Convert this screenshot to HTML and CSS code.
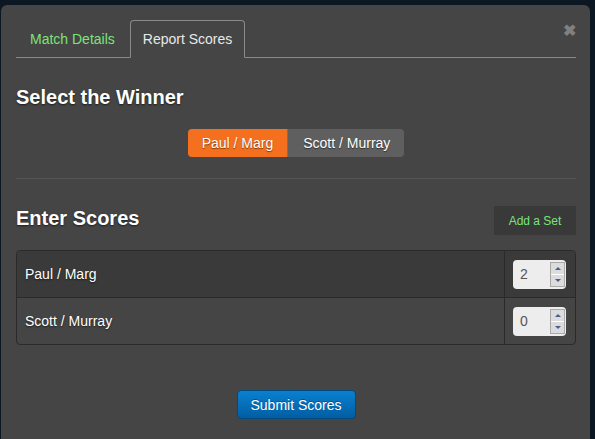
FILE: index.html
```html
<!DOCTYPE html>
<html lang="en">
<head>
  <meta charset="UTF-8" />
  <title>Report Scores</title>
  <link rel="stylesheet" href="styles.css">
</head>
<body>
  <div class="modal">
    <span class="close">&#10006;</span>
    <ul class="tabs">
      <li><a href="#">Match Details</a></li>
      <li class="active"><a href="#">Report Scores</a></li>
    </ul>

    <h3>Select the Winner</h3>
    <div class="winner">
      <div class="btn-group">
        <button class="btn btn-orange">Paul / Marg</button>
        <button class="btn btn-gray">Scott / Murray</button>
      </div>
    </div>

    <hr class="divider">

    <div class="scores-head">
      <h3>Enter Scores</h3>
      <button class="add-set">Add a Set</button>
    </div>

    <div class="score-table">
      <div class="score-row odd">
        <div class="team">Paul / Marg</div>
        <div class="set">
          <div class="spin"><span class="val">2</span><span class="arrows"><i class="up"></i><i class="down"></i></span></div>
        </div>
      </div>
      <div class="score-row">
        <div class="team">Scott / Murray</div>
        <div class="set">
          <div class="spin"><span class="val">0</span><span class="arrows"><i class="up"></i><i class="down"></i></span></div>
        </div>
      </div>
    </div>

    <div class="actions">
      <button class="submit">Submit Scores</button>
    </div>
  </div>
</body>
</html>
```

FILE: styles.css
```css
body {
  margin: 0;
  background: #0b1823;
  font-family: "Liberation Sans", Arial, sans-serif;
  font-size: 14px;
  color: #fff;
  height: 439px;
  overflow: hidden;
}
.modal {
  position: relative;
  margin: 5px 5px 0 1px;
  height: 460px;
  background: #454545;
  border-radius: 6px;
  padding: 15px 14px 0 15px;
  box-sizing: border-box;
}
.close {
  position: absolute;
  top: 16px;
  right: 14px;
  font-size: 16px;
  color: #808080;
  font-weight: bold;
}
.tabs {
  list-style: none;
  margin: 0;
  padding: 0 0 0 1px;
  display: flex;
  border-bottom: 1px solid #8a8a8a;
  height: 37px;
}
.tabs li {
  margin-right: 2px;
}
.tabs a {
  display: block;
  padding: 8px 12px;
  line-height: 20px;
  border: 1px solid transparent;
  border-radius: 4px 4px 0 0;
  text-decoration: none;
  color: #7ce37a;
}
.tabs .active a {
  color: #e8e8e8;
  background: #454545;
  border-color: #8a8a8a;
  border-bottom-color: #454545;
  height: 20px;
  padding-bottom: 8px;
}
h3 {
  margin: 0;
  font-size: 20px;
  line-height: 24px;
  font-weight: bold;
  text-shadow: 0 1px 2px rgba(0, 0, 0, 0.6);
}
.modal > h3 {
  margin-top: 27px;
}
.winner {
  display: flex;
  justify-content: center;
  margin-top: 20px;
}
.btn-group {
  display: flex;
}
.btn {
  font-family: inherit;
  font-size: 14px;
  color: #fff;
  border: none;
  height: 28px;
  padding: 0 14px;
  text-shadow: 0 1px 1px rgba(0, 0, 0, 0.5);
}
.btn-orange {
  background: #f46f1e;
  border-radius: 4px 0 0 4px;
  border-right: 1px solid #c65516;
}
.btn-gray {
  background: #5f5f5f;
  border-radius: 0 4px 4px 0;
  padding: 0 14px 0 15px;
}
.divider {
  border: none;
  border-top: 1px solid #555;
  margin: 21px 0 0;
}
.scores-head {
  display: flex;
  justify-content: space-between;
  align-items: center;
  margin-top: 27px;
}
.scores-head h3 {
  margin-bottom: 5px;
}
.add-set {
  background: #393939;
  border: none;
  color: #7ce37a;
  font-family: inherit;
  font-size: 12px;
  width: 82px;
  height: 29px;
}
.score-table {
  margin-top: 15px;
  border: 1px solid #2a2a2a;
  border-radius: 4px;
  overflow: hidden;
}
.score-row {
  display: flex;
  height: 46px;
}
.score-row + .score-row {
  border-top: 1px solid #2a2a2a;
}
.score-row.odd {
  background: #3a3a3a;
}
.team {
  flex: 1;
  display: flex;
  align-items: center;
  padding-left: 8px;
  text-shadow: 0 1px 2px rgba(0, 0, 0, 0.6);
}
.set {
  width: 71px;
  border-left: 1px solid #2a2a2a;
  display: flex;
  align-items: center;
  padding-left: 8px;
  box-sizing: border-box;
}
.spin {
  width: 53px;
  height: 29px;
  background: #ededed;
  border-radius: 4px;
  display: flex;
  align-items: center;
  justify-content: space-between;
  box-sizing: border-box;
  padding: 2px 1px 2px 7px;
}
.val {
  color: #555;
  font-size: 14px;
}
.arrows {
  display: flex;
  flex-direction: column;
  gap: 1px;
  border: 1px solid #aaa;
  background: #fff;
}
.arrows i {
  display: block;
  width: 13px;
  height: 11px;
  background: #dcdcdc;
  position: relative;
}
.arrows i::after {
  content: "";
  position: absolute;
  left: 4px;
  border-left: 3px solid transparent;
  border-right: 3px solid transparent;
}
.arrows .up::after {
  top: 4px;
  border-bottom: 3px solid #4a5a9a;
}
.arrows .down::after {
  top: 4px;
  border-top: 3px solid #4a5a9a;
}
.actions {
  display: flex;
  justify-content: center;
  margin-top: 45px;
}
.submit {
  font-family: inherit;
  font-size: 14px;
  color: #fff;
  width: 119px;
  height: 29px;
  border: 1px solid #03497d;
  border-radius: 4px;
  background: linear-gradient(#0a80d0, #005ea3);
  text-shadow: 0 -1px 0 rgba(0, 0, 0, 0.3);
}
```
